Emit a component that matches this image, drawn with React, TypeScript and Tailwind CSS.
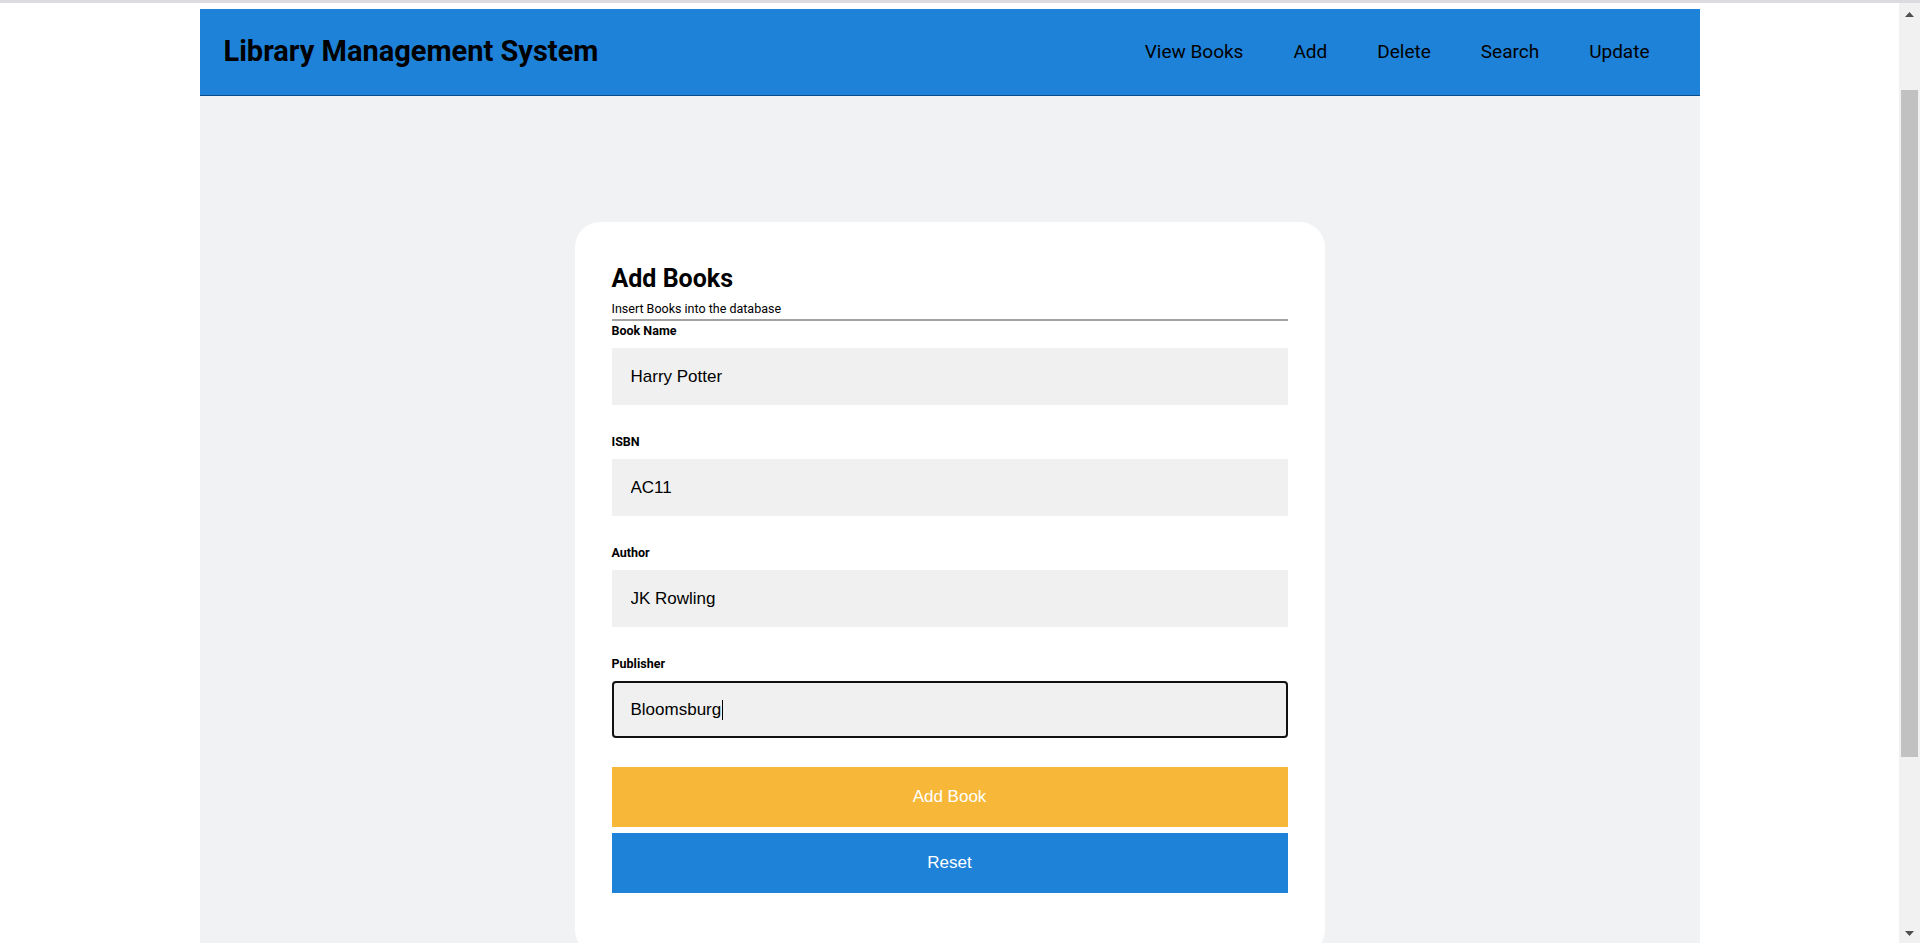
const navItems = ["View Books", "Add", "Delete", "Search", "Update"];

const fields = [
  { label: "Book Name", value: "Harry Potter" },
  { label: "ISBN", value: "AC11" },
  { label: "Author", value: "JK Rowling" },
];

function Field({ label, value }: { label: string; value: string }) {
  return (
    <div className="flex flex-col">
      <label className="text-[12.5px] leading-[14px] font-bold text-black">{label}</label>
      <input
        readOnly
        value={value}
        className="mt-[10px] h-[57px] w-full bg-[#f0f0f0] pl-[19px] text-[17px] text-black outline-none font-['Liberation_Sans',Arial,sans-serif]"
      />
    </div>
  );
}

function Scrollbar() {
  return (
    <div className="flex w-[21px] flex-col items-center bg-[#f1f1f1] pt-[9px] pb-[7px]">
      <svg width="9" height="5" viewBox="0 0 9 5" className="block">
        <path d="M4.5 0 L9 5 L0 5 Z" fill="#505050" />
      </svg>
      <div className="mt-[73px] h-[667px] w-[17px] bg-[#c1c1c1]" />
      <div className="flex-1" />
      <svg width="9" height="5" viewBox="0 0 9 5" className="block">
        <path d="M0 0 L9 0 L4.5 5 Z" fill="#505050" />
      </svg>
    </div>
  );
}

export default function App() {
  return (
    <div className="flex h-screen flex-col overflow-hidden bg-white font-['Roboto',sans-serif]">
      <div className="h-[3px] shrink-0 bg-[#dcdce0]" />
      <div className="flex min-h-0 flex-1">
        <div className="flex-1 pt-[6px]">
          <div className="mx-auto flex h-full w-[1500px] flex-col">
            <header className="flex h-[87px] shrink-0 items-center justify-between border-b border-[#0c4d87] bg-[#1e82d8] pl-[24px] pr-[50px]">
              <h1 className="text-[29px] font-bold text-black">Library Management System</h1>
              <nav className="flex gap-[50px]">
                {navItems.map((item) => (
                  <a key={item} href="#" className="text-[19px] text-black">
                    {item}
                  </a>
                ))}
              </nav>
            </header>
            <main className="min-h-0 flex-1 bg-[#f1f2f4] pt-[126px]">
              <div className="mx-auto w-[750px] rounded-[25px] bg-white px-[37px] pt-[43px] pb-[62px]">
                <h2 className="text-[25px] leading-[28px] font-bold text-black">Add Books</h2>
                <p className="mt-[9px] text-[12.5px] leading-[14px] text-black">Insert Books into the database</p>
                <div className="mt-[3px] border-t-2 border-[#a3a3a3]" />
                <div className="mt-[3px] flex flex-col gap-[30px]">
                  {fields.map((f) => (
                    <Field key={f.label} label={f.label} value={f.value} />
                  ))}
                  <div className="flex flex-col">
                    <label className="text-[12.5px] leading-[14px] font-bold text-black">Publisher</label>
                    <div className="mt-[10px] flex h-[57px] items-center rounded-[4px] border-2 border-[#111] bg-[#f0f0f0] pl-[17px] text-[17px] text-black font-['Liberation_Sans',Arial,sans-serif]">
                      <span>Bloomsburg</span>
                      <span className="ml-px h-[20px] w-px bg-black" />
                    </div>
                  </div>
                </div>
                <div className="mt-[29px] flex flex-col gap-[6px]">
                  <button className="h-[60px] w-full bg-[#f7b739] text-[17px] text-white font-['Liberation_Sans',Arial,sans-serif]">
                    Add Book
                  </button>
                  <button className="h-[60px] w-full bg-[#1e82d9] text-[17px] text-white font-['Liberation_Sans',Arial,sans-serif]">
                    Reset
                  </button>
                </div>
              </div>
            </main>
          </div>
        </div>
        <Scrollbar />
      </div>
    </div>
  );
}
